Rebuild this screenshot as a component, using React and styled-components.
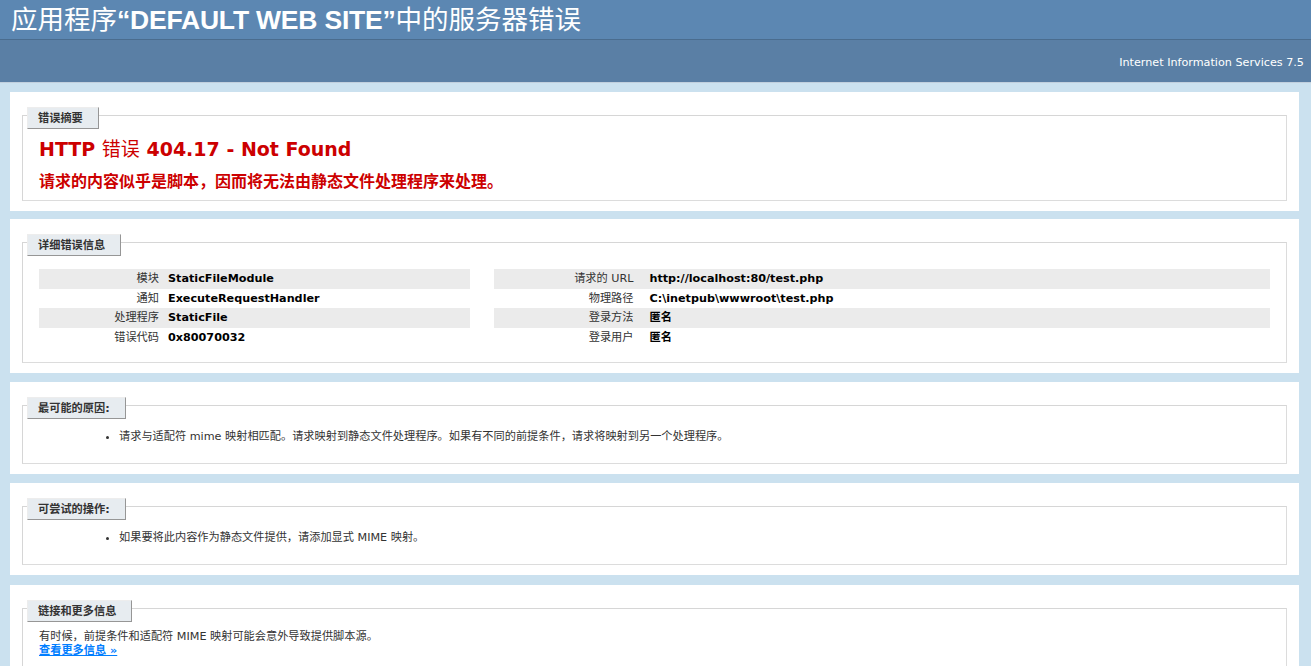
import React from "react";
import styled, { createGlobalStyle } from "styled-components";

const GlobalStyle = createGlobalStyle`
  body {
    margin: 0;
    background: #cbe1ef;
    font-family: "DejaVu Sans", "Noto Sans CJK SC", sans-serif;
    font-size: 11.2px;
    line-height: 14px;
    color: #000;
  }
`;

const Header = styled.div`
  background-color: #5c87b2;
  padding: 4px 11px 8px;
`;

const Title = styled.h1`
  height: 27px;
  margin: 0;
  color: #fff;
  font-family: "Noto Sans CJK SC", sans-serif;
  font-weight: normal;
  font-size: 26.5px;
  line-height: 27px;
  white-space: nowrap;
`;

const TitleLatin = styled.span`
  font-family: "Liberation Sans", "Noto Sans CJK SC", sans-serif;
  font-weight: bold;
  letter-spacing: -0.2px;
`;

const ServerVersion = styled.div`
  height: 24px;
  background-color: #5a7fa5;
  border-top: 1px solid #4a6c8e;
  border-bottom: 1px solid #c1cfdd;
  padding: 11px 7px 7px;
  color: #fff;
  text-align: right;

  p {
    margin: 5px 0;
  }
`;

const Content = styled.div`
  padding: 0 12px 0 10px;
`;

const Container = styled.div`
  background: #fff;
  margin-top: ${(p) => p.$gap || 9}px;
  padding: 10px;
`;

const Group = styled.div`
  margin: 13px 2px 0;
  padding: 0 16px ${(p) => p.$bottom || 10}px 16px;
  border: 1px solid #d6d6d6;
  border-right-color: #dcdcdc;
  border-bottom-color: #dcdcdc;
`;

const Tab = styled.div`
  width: fit-content;
  color: #333;
  padding: 4px 15px 2px 10px;
  margin: -9px 0 8px -12px;
  border-top: 1px solid #ededed;
  border-left: 1px solid #ededed;
  border-right: 1px solid #969696;
  border-bottom: 1px solid #969696;
  background: #e7ecf0;
  font-weight: bold;
  line-height: 14px;
`;

const ErrorCode = styled.h2`
  margin: 0;
  color: #cc0000;
  font-size: 19px;
  line-height: 24px;
  font-weight: bold;

  span {
    font-weight: normal;
  }
`;

const ErrorText = styled.h3`
  margin: 9px 0 0 0;
  color: #cc0000;
  font-family: "Noto Sans CJK SC", sans-serif;
  font-size: 16px;
  line-height: 20px;
  font-weight: bold;
`;

const Details = styled.div`
  display: flex;
  gap: 2%;
`;

const Half = styled.div`
  flex: 0 0 ${(p) => p.$w};
`;

const Table = styled.table`
  margin: 5px 0 5px;
  width: 100%;
  border: none;
  border-collapse: collapse;
`;

const Row = styled.tr`
  background: ${(p) => (p.$alt ? "#ebebeb" : "transparent")};
`;

const Th = styled.th`
  box-sizing: border-box;
  width: ${(p) => p.$w}px;
  padding: 3px ${(p) => p.$pr}px 3px 0;
  line-height: 13.5px;
  text-align: right;
  vertical-align: top;
  font-weight: normal;
  color: #333;
`;

const Td = styled.td`
  padding: 3px 0;
  line-height: 13.5px;
  vertical-align: top;
  font-weight: bold;
  text-align: left;
`;

const List = styled.ul`
  margin: 11px 0 9px 40px;
  padding-left: 40px;
  color: #333;
`;

const Note = styled.div`
  color: #333;
`;

const Para = styled.p`
  margin: 0 0 10px 0;
`;

const MoreLink = styled.a`
  color: #007eff;
  font-weight: bold;
  text-decoration: underline;
`;

const left = [
  ["模块", "StaticFileModule"],
  ["通知", "ExecuteRequestHandler"],
  ["处理程序", "StaticFile"],
  ["错误代码", "0x80070032"],
];

const right = [
  ["请求的 URL", "http://localhost:80/test.php"],
  ["物理路径", "C:\\inetpub\\wwwroot\\test.php"],
  ["登录方法", "匿名"],
  ["登录用户", "匿名"],
];

const InfoTable = ({ rows, thWidth, thPad }) => (
  <Table>
    <tbody>
      {rows.map(([label, value], i) => (
        <Row key={label} $alt={i % 2 === 0}>
          <Th $w={thWidth} $pr={thPad}>
            {label}
          </Th>
          <Td>{value}</Td>
        </Row>
      ))}
    </tbody>
  </Table>
);

export default function App() {
  return (
    <>
      <GlobalStyle />
      <Header>
        <Title>
          应用程序<TitleLatin>“DEFAULT WEB SITE”</TitleLatin>中的服务器错误
        </Title>
      </Header>
      <ServerVersion>
        <p>Internet Information Services 7.5</p>
      </ServerVersion>
      <Content>
        <Container>
          <Group>
            <Tab>错误摘要</Tab>
            <ErrorCode>
              HTTP <span>错误</span> 404.17 - Not Found
            </ErrorCode>
            <ErrorText>
              请求的内容似乎是脚本，因而将无法由静态文件处理程序来处理。
            </ErrorText>
          </Group>
        </Container>
        <Container $gap={8}>
          <Group>
            <Tab>详细错误信息</Tab>
            <Details>
              <Half $w="35%">
                <InfoTable rows={left} thWidth={129} thPad={9} />
              </Half>
              <Half $w="63%">
                <InfoTable rows={right} thWidth={155} thPad={16} />
              </Half>
            </Details>
          </Group>
        </Container>
        <Container>
          <Group>
            <Tab>最可能的原因:</Tab>
            <List>
              <li>
                请求与适配符 mime 映射相匹配。请求映射到静态文件处理程序。如果有不同的前提条件，请求将映射到另一个处理程序。
              </li>
            </List>
          </Group>
        </Container>
        <Container>
          <Group>
            <Tab>可尝试的操作:</Tab>
            <List>
              <li>如果要将此内容作为静态文件提供，请添加显式 MIME 映射。</li>
            </List>
          </Group>
        </Container>
        <Container $gap={10}>
          <Group>
            <Tab>链接和更多信息</Tab>
            <Note>有时候，前提条件和适配符 MIME 映射可能会意外导致提供脚本源。</Note>
            <Para>
              <MoreLink href="#">查看更多信息 »</MoreLink>
            </Para>
          </Group>
        </Container>
      </Content>
    </>
  );
}
